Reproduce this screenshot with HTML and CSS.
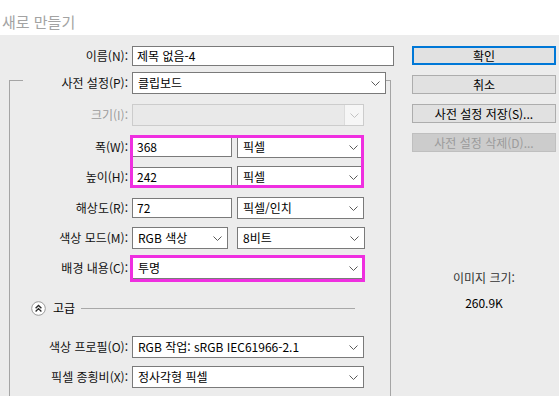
FILE: index.html
```html
<!DOCTYPE html>
<html lang="ko">
<head>
<meta charset="utf-8">
<title>새로 만들기</title>
<link rel="stylesheet" href="styles.css">
</head>
<body>
<div class="titlebar">새로 만들기</div>
<div class="main">
  <div class="left">
    <div class="row name-row">
      <span class="lbl lbl-name">이름(N):</span>
      <div class="input name-input">제목 없음-4</div>
    </div>
    <fieldset class="group">
      <legend class="preset">
        <span class="lbl lbl-legend">사전 설정(P):</span>
        <div class="select preset-select"><span>클립보드</span><svg class="chev" width="9" height="5" viewBox="0 0 9 5"><path d="M0.5 0.5 L4.5 4.5 L8.5 0.5" fill="none" stroke="#5a5a5a"/></svg></div>
      </legend>
      <div class="rows">
        <div class="row">
          <span class="lbl disabled">크기(I):</span>
          <div class="select full sel-disabled"><span></span><span class="dis-arrow"><svg class="chev" width="9" height="5" viewBox="0 0 9 5"><path d="M0.5 0.5 L4.5 4.5 L8.5 0.5" fill="none" stroke="#c2c2c2"/></svg></span></div>
        </div>
        <div class="hl hl-pair">
          <div class="row">
            <span class="lbl">폭(W):</span>
            <div class="input num">368</div>
            <div class="select unit"><span>픽셀</span><svg class="chev" width="9" height="5" viewBox="0 0 9 5"><path d="M0.5 0.5 L4.5 4.5 L8.5 0.5" fill="none" stroke="#5a5a5a"/></svg></div>
          </div>
          <div class="row">
            <span class="lbl">높이(H):</span>
            <div class="input num">242</div>
            <div class="select unit"><span>픽셀</span><svg class="chev" width="9" height="5" viewBox="0 0 9 5"><path d="M0.5 0.5 L4.5 4.5 L8.5 0.5" fill="none" stroke="#5a5a5a"/></svg></div>
          </div>
        </div>
        <div class="row row-res">
          <span class="lbl">해상도(R):</span>
          <div class="input num">72</div>
          <div class="select unit"><span>픽셀/인치</span><svg class="chev" width="9" height="5" viewBox="0 0 9 5"><path d="M0.5 0.5 L4.5 4.5 L8.5 0.5" fill="none" stroke="#5a5a5a"/></svg></div>
        </div>
        <div class="row">
          <span class="lbl">색상 모드(M):</span>
          <div class="select mode"><span>RGB 색상</span><svg class="chev" width="9" height="5" viewBox="0 0 9 5"><path d="M0.5 0.5 L4.5 4.5 L8.5 0.5" fill="none" stroke="#5a5a5a"/></svg></div>
          <div class="select bits"><span>8비트</span><svg class="chev" width="9" height="5" viewBox="0 0 9 5"><path d="M0.5 0.5 L4.5 4.5 L8.5 0.5" fill="none" stroke="#5a5a5a"/></svg></div>
        </div>
        <div class="row hl hl-bg">
          <span class="lbl">배경 내용(C):</span>
          <div class="select full"><span>투명</span><svg class="chev" width="9" height="5" viewBox="0 0 9 5"><path d="M0.5 0.5 L4.5 4.5 L8.5 0.5" fill="none" stroke="#5a5a5a"/></svg></div>
        </div>
        <div class="adv">
          <svg class="adv-icon" width="15" height="15" viewBox="0 0 15 15"><circle cx="7.5" cy="7.5" r="6.8" fill="#fff" stroke="#9a9a9a"/><path d="M4.6 7.2 L7.5 4.4 L10.4 7.2 M4.6 10.4 L7.5 7.6 L10.4 10.4" fill="none" stroke="#2a2a2a" stroke-width="1.4"/></svg>
          <span class="adv-text">고급</span>
          <span class="adv-line"></span>
        </div>
        <div class="row row-profile">
          <span class="lbl">색상 프로필(O):</span>
          <div class="select full"><span>RGB 작업: sRGB IEC61966-2.1</span><svg class="chev" width="9" height="5" viewBox="0 0 9 5"><path d="M0.5 0.5 L4.5 4.5 L8.5 0.5" fill="none" stroke="#5a5a5a"/></svg></div>
        </div>
        <div class="row">
          <span class="lbl">픽셀 종횡비(X):</span>
          <div class="select full"><span>정사각형 픽셀</span><svg class="chev" width="9" height="5" viewBox="0 0 9 5"><path d="M0.5 0.5 L4.5 4.5 L8.5 0.5" fill="none" stroke="#5a5a5a"/></svg></div>
        </div>
      </div>
    </fieldset>
  </div>
  <div class="right">
    <div class="btn btn-default">확인</div>
    <div class="btn">취소</div>
    <div class="btn">사전 설정 저장(S)...</div>
    <div class="btn btn-disabled">사전 설정 삭제(D)...</div>
    <div class="info">
      <div class="info-label">이미지 크기:</div>
      <div class="info-value">260.9K</div>
    </div>
  </div>
</div>
</body>
</html>
```

FILE: styles.css
```css
html, body {
  margin: 0;
  height: 396px;
  overflow: hidden;
}
body {
  font-family: "Noto Sans CJK KR", "Noto Sans", sans-serif;
  font-size: 12px;
  color: #000;
  background: #ececec;
}
.titlebar {
  height: 35px;
  box-sizing: border-box;
  padding: 8px 0 0 2px;
  line-height: 27px;
  font-size: 15px;
  color: #a3a3a3;
  background: #fff;
}
.main {
  display: flex;
}
.left {
  width: 394px;
  padding-top: 11px;
  flex-shrink: 0;
}
.right {
  width: 144px;
  margin-left: 18px;
  padding-top: 11px;
  display: flex;
  flex-direction: column;
  gap: 10px;
}
.row {
  display: flex;
  align-items: center;
  height: 22px;
}
.name-row {
  height: 20px;
}
.lbl {
  width: 118px;
  padding-right: 4px;
  text-align: right;
  white-space: nowrap;
  line-height: 16px;
  flex-shrink: 0;
  color: #111;
}
.lbl-name {
  width: 128px;
}
.lbl-legend {
  width: 105px;
}
.lbl.disabled {
  color: #9c9c9c;
}
.input {
  height: 20px;
  box-sizing: border-box;
  border: 1px solid #7a7a7a;
  background: #fff;
  padding: 0 4px;
  line-height: 18px;
  white-space: nowrap;
}
.name-input {
  width: 262px;
}
.num {
  width: 100px;
}
.select {
  height: 22px;
  box-sizing: border-box;
  border: 1px solid #7a7a7a;
  background: #fff;
  padding: 0 5px 0 5px;
  display: flex;
  align-items: center;
  justify-content: space-between;
  line-height: 20px;
  white-space: nowrap;
  flex-shrink: 0;
}
.chev {
  display: block;
  flex-shrink: 0;
}
.preset-select {
  width: 254px;
}
.full {
  width: 232px;
}
.unit {
  width: 127px;
  margin-left: 5px;
}
.mode {
  width: 96px;
}
.bits {
  width: 128px;
  margin-left: 9px;
}
.sel-disabled {
  border-color: #cccccc;
  background: #e9e9e9;
  padding: 0;
}
.dis-arrow {
  width: 19px;
  height: 20px;
  box-sizing: border-box;
  border-left: 1px solid #dcdcdc;
  background: #f6f6f6;
  display: flex;
  align-items: center;
  justify-content: center;
}
.group {
  margin: 0 0 0 9px;
  padding: 0;
  width: 382px;
  box-sizing: border-box;
  min-width: 0;
  border: 1px solid #a5a5a5;
}
.preset {
  margin-left: 13px;
  padding: 6px 0 0 0;
  display: flex;
  align-items: center;
}
.rows {
  padding: 10px 0 14px 0;
  display: flex;
  flex-direction: column;
  gap: 8px;
}
.hl {
  position: relative;
}
.hl::after {
  content: "";
  position: absolute;
  box-sizing: border-box;
  border: 3px solid #ef2fe0;
  pointer-events: none;
}
.hl-pair {
  display: flex;
  flex-direction: column;
  gap: 8px;
  margin-top: 2px;
}
.hl-pair::after {
  left: 120px;
  top: -1px;
  width: 234px;
  height: 53px;
}
.hl-bg::after {
  left: 120px;
  top: -2px;
  width: 235px;
  height: 27px;
}
.row-res {
  margin-top: 1px;
}
.adv {
  display: flex;
  align-items: center;
  height: 16px;
  margin-top: 13px;
  padding-left: 21px;
  padding-right: 35px;
}
.adv-icon {
  display: block;
  flex-shrink: 0;
}
.adv-text {
  margin-left: 7px;
  line-height: 16px;
}
.adv-line {
  flex: 1;
  height: 1px;
  margin-left: 6px;
  background: #a8a8a8;
}
.row-profile {
  margin-top: 12px;
}
.btn {
  height: 19px;
  box-sizing: border-box;
  border: 1px solid #adadad;
  background: #e1e1e1;
  text-align: center;
  line-height: 17px;
  white-space: nowrap;
}
.btn-default {
  border: 2px solid #0078d7;
  line-height: 15px;
}
.btn-disabled {
  background: #cccccc;
  border-color: #bfbfbf;
  color: #9b9b9b;
}
.info {
  margin-top: 109px;
  text-align: center;
}
.info-label {
  line-height: 14px;
  color: #333;
}
.info-value {
  line-height: 14px;
  margin-top: 11px;
}
```
